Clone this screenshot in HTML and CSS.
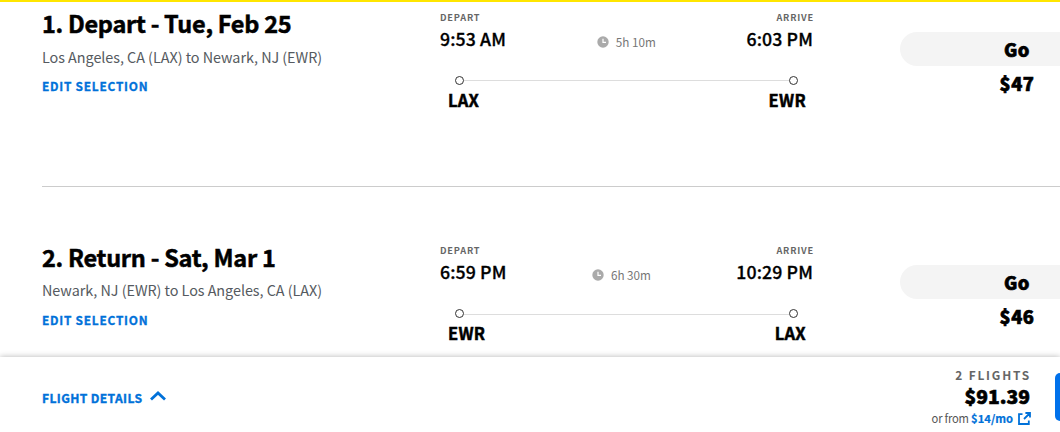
FILE: index.html
```
<!DOCTYPE html>
<html lang="en">
<head>
<meta charset="utf-8">
<title>Your flights</title>
<link rel="stylesheet" href="styles.css">
</head>
<body>
<main class="page">
  <section class="flight">
    <div class="summary">
      <h2 class="title">1. Depart - Tue, Feb 25</h2>
      <p class="route">Los Angeles, CA (LAX) to Newark, NJ (EWR)</p>
      <a class="edit">EDIT SELECTION</a>
    </div>
    <div class="times">
      <div class="labels"><span>DEPART</span><span>ARRIVE</span></div>
      <div class="clock-row">
        <span class="time">9:53 AM</span>
        <span class="duration"><svg class="clock" viewBox="0 0 12 12"><circle cx="6" cy="6" r="5.7" fill="#aaa"/><path d="M6 2.7V6.4H9" fill="none" stroke="#fff" stroke-width="1.2"/></svg>5h 10m</span>
        <span class="time">6:03 PM</span>
      </div>
      <div class="track"><i class="dot"></i><i class="line"></i><i class="dot"></i></div>
      <div class="codes"><span>LAX</span><span>EWR</span></div>
    </div>
    <div class="fare"><div class="pill">Go</div><div class="price">$47</div></div>
  </section>
  <section class="flight second">
    <div class="summary">
      <h2 class="title">2. Return - Sat, Mar 1</h2>
      <p class="route">Newark, NJ (EWR) to Los Angeles, CA (LAX)</p>
      <a class="edit">EDIT SELECTION</a>
    </div>
    <div class="times">
      <div class="labels"><span>DEPART</span><span>ARRIVE</span></div>
      <div class="clock-row">
        <span class="time">6:59 PM</span>
        <span class="duration"><svg class="clock" viewBox="0 0 12 12"><circle cx="6" cy="6" r="5.7" fill="#aaa"/><path d="M6 2.7V6.4H9" fill="none" stroke="#fff" stroke-width="1.2"/></svg>6h 30m</span>
        <span class="time">10:29 PM</span>
      </div>
      <div class="track low"><i class="dot"></i><i class="line"></i><i class="dot"></i></div>
      <div class="codes"><span>EWR</span><span>LAX</span></div>
    </div>
    <div class="fare"><div class="pill">Go</div><div class="price">$46</div></div>
  </section>
  <footer class="bar">
    <a class="details">FLIGHT DETAILS<svg class="chevron" viewBox="0 0 16 10"><path d="M1 8.6L8 2L15 8.6" fill="none" stroke="#0071d9" stroke-width="2.8"/></svg></a>
    <div class="total">
      <div class="count">2 FLIGHTS</div>
      <div class="amount">$91.39</div>
      <div class="monthly">or from <b>$14/mo</b><svg class="external" viewBox="0 0 13 13"><path d="M4.5 2.2H1V12H10.8V8.5M7.4 1H12V5.6M12 1L6 7" fill="none" stroke="#0071d9" stroke-width="1.8"/></svg></div>
    </div>
    <div class="next"></div>
  </footer>
</main>
</body>
</html>
```
FILE: styles.css
```
* { box-sizing: border-box; }
body {
  margin: 0;
  background: #fff;
  color: #000;
  font-family: "Noto Sans CJK SC", "Noto Sans", sans-serif;
}
.page {
  width: 1060px;
  height: 432px;
  overflow: hidden;
  border-top: 2px solid #ffe600;
  display: flex;
  flex-direction: column;
}
.flight {
  height: 184px;
  flex: none;
  margin-left: 42px;
  display: grid;
  grid-template-columns: 398px 373px 247px;
}
.second {
  height: 171px;
  border-top: 1px solid #ccc;
  padding-top: 48px;
}
.summary { padding-top: 5px; }
.second .summary { padding-top: 6px; }
.title { margin: 0; font-size: 23.5px; line-height: 32px; font-weight: 700; white-space: nowrap; letter-spacing: -.28px; -webkit-text-stroke: .5px; }
.route { margin: 4px 0 0; font-size: 14.4px; line-height: 28px; color: #555a60; white-space: nowrap; letter-spacing: -.05px; }
.edit { display: block; font-size: 11.9px; line-height: 26px; margin-top: 2px; font-weight: 700; color: #0071d9; letter-spacing: .75px; -webkit-text-stroke: .3px; }
.second .route { margin-top: 3px; }
.second .edit { margin-top: 3px; }
.times { padding-top: 7px; }
.labels { display: flex; justify-content: space-between; font-size: 9.2px; line-height: 16px; font-weight: 700; color: #666; letter-spacing: .8px; }
.labels span:last-child { margin-right: -1px; }
.clock-row { display: flex; justify-content: space-between; height: 26px; line-height: 26px; }
.time { font-size: 17.7px; font-weight: 500; white-space: nowrap; letter-spacing: .12px; -webkit-text-stroke: .3px; }
.duration { display: flex; align-items: center; font-size: 11.7px; line-height: 26px; color: #767676; padding-top: 7px; }
.clock { width: 12px; height: 12px; margin-right: 7px; }
.track { display: flex; align-items: center; height: 9px; margin: 25px 15px 0; }
.dot { width: 9px; height: 9px; border: 1px solid #333; border-radius: 50%; }
.line { flex: 1; height: 1px; background: #ddd; }
.low .line { margin-top: 2px; }
.codes { display: flex; justify-content: space-between; margin: 3px 7px 0 8px; font-size: 16.5px; line-height: 24px; font-weight: 700; letter-spacing: .3px; -webkit-text-stroke: .5px; }
.fare { padding: 30px 0 0 87px; text-align: center; font-size: 18.3px; font-weight: 900; letter-spacing: .5px; -webkit-text-stroke: .65px; }
.pill { width: 233px; height: 34px; line-height: 34px; padding-left: 1px; border-radius: 17px; background: #f4f4f4; }
.price { width: 233px; height: 34px; line-height: 34px; padding-left: 1px; }
.bar {
  flex: none;
  height: 75px;
  padding-left: 42px;
  display: flex;
  background: #fff;
  box-shadow: 0 0 6px rgba(0, 0, 0, .3);
}
.details { display: flex; align-items: center; height: 80px; font-size: 12.1px; font-weight: 700; color: #0071d9; letter-spacing: .37px; -webkit-text-stroke: .35px; }
.chevron { width: 16px; height: 10px; margin: -3px 0 0 8px; }
.total { margin-left: auto; padding-top: 8px; text-align: right; width: 150px; }
.count { font-size: 11.9px; line-height: 20px; font-weight: 700; color: #666; letter-spacing: 1.8px; margin-right: -1px; }
.amount { font-size: 19.3px; line-height: 22px; font-weight: 900; -webkit-text-stroke: .6px; }
.monthly { display: flex; justify-content: flex-end; align-items: center; font-size: 11.2px; line-height: 23px; color: #555; white-space: pre; letter-spacing: -.2px; margin-right: -1px; }
.monthly b { color: #0071d9; -webkit-text-stroke: .2px; letter-spacing: 0; }
.external { width: 13px; height: 13px; margin-left: 5px; }
.next { width: 100px; height: 48px; flex: none; margin: 16px -95px 0 25px; border-radius: 5px; background: #0071eb; }
```
